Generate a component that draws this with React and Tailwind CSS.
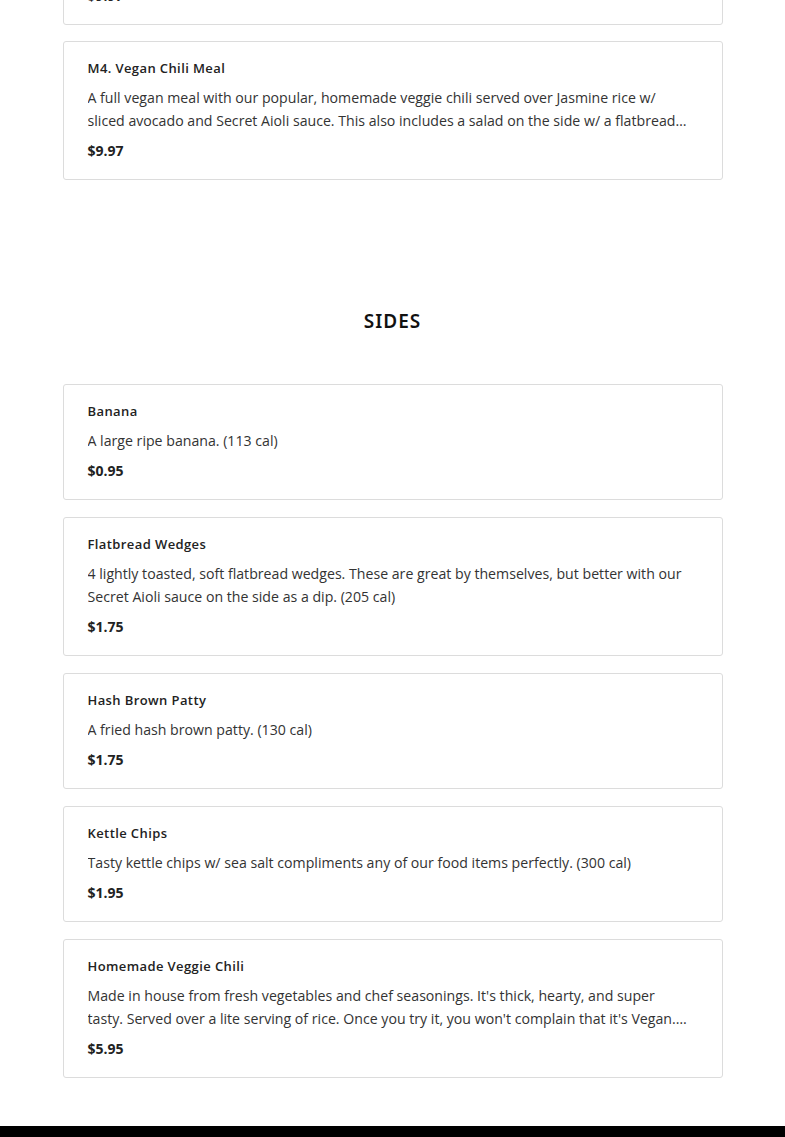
const meals = [
  {
    name: 'M3. Veggie Burger Meal',
    desc: 'Our veggie burger served with kettle chips and a drink of your choice. Add a side of Secret Aioli sauce for dipping.',
    price: '$9.97',
  },
  {
    name: 'M4. Vegan Chili Meal',
    desc: 'A full vegan meal with our popular, homemade veggie chili served over Jasmine rice w/ sliced avocado and Secret Aioli sauce. This also includes a salad on the side w/ a flatbread wedge and a drink of your choice.',
    price: '$9.97',
  },
]

const sides = [
  { name: 'Banana', desc: 'A large ripe banana. (113 cal)', price: '$0.95' },
  {
    name: 'Flatbread Wedges',
    desc: '4 lightly toasted, soft flatbread wedges. These are great by themselves, but better with our Secret Aioli sauce on the side as a dip. (205 cal)',
    price: '$1.75',
  },
  { name: 'Hash Brown Patty', desc: 'A fried hash brown patty. (130 cal)', price: '$1.75' },
  {
    name: 'Kettle Chips',
    desc: 'Tasty kettle chips w/ sea salt compliments any of our food items perfectly. (300 cal)',
    price: '$1.95',
  },
  {
    name: 'Homemade Veggie Chili',
    desc: "Made in house from fresh vegetables and chef seasonings. It's thick, hearty, and super tasty. Served over a lite serving of rice. Once you try it, you won't complain that it's Vegan. Add avocado or cheese for an extra charge.",
    price: '$5.95',
  },
]

function ItemCard({ item }) {
  return (
    <div className="border border-[#dcdcdc] rounded-[3px] bg-white pl-6 pr-[30px] pt-4 pb-[18px]">
      <h3 className="text-[13px] leading-5 font-semibold tracking-[0.4px] text-[#222]">
        {item.name}
      </h3>
      <p className="mt-2 text-[14.15px] leading-[23px] text-[#333] line-clamp-2">
        {item.desc}
      </p>
      <div className="mt-[9px] text-[14px] leading-5 font-bold text-[#222]">
        {item.price}
      </div>
    </div>
  )
}

export default function App() {
  return (
    <div className="min-h-screen bg-white overflow-hidden font-['Open_Sans',sans-serif]">
      <div className="w-[660px] mx-auto mt-[-114px] flex flex-col gap-4">
        {meals.map(m => <ItemCard key={m.name} item={m} />)}
      </div>

      <section className="w-[660px] mx-auto pt-[129px]">
        <h2 className="text-center text-[19px] leading-6 font-semibold tracking-[1px] text-[#111] font-['Noto_Sans',sans-serif]">
          SIDES
        </h2>
        <div className="mt-[51px] flex flex-col gap-[17px]">
          {sides.map(s => <ItemCard key={s.name} item={s} />)}
        </div>
      </section>

      <footer className="mt-12 h-[120px] bg-black" />
    </div>
  )
}
